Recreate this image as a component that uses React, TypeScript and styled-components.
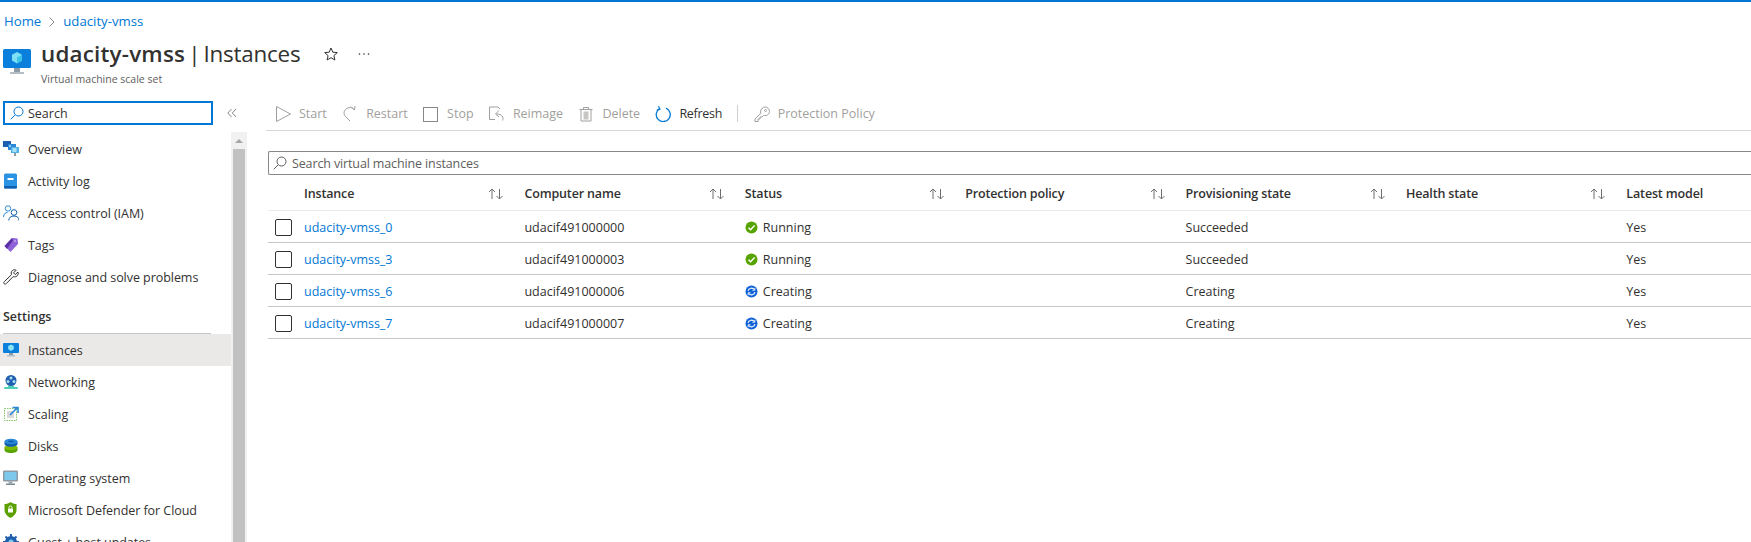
import type { ReactNode } from "react";
import styled, { createGlobalStyle } from "styled-components";

const GlobalStyle = createGlobalStyle`
  html, body {
    margin: 0;
    padding: 0;
    height: 100%;
    overflow: hidden;
    background: #fff;
    font-family: "Open Sans", "Noto Sans", "Liberation Sans", sans-serif;
    font-size: 12.5px;
    color: #323130;
  }
  * { box-sizing: border-box; }
`;

const Page = styled.div`
  width: 1751px;
  height: 542px;
  overflow: hidden;
  border-top: 2px solid #0078d4;
`;

const Breadcrumb = styled.div`
  height: 34px;
  padding: 10px 0 0 4px;
  display: flex;
  align-items: flex-start;
  gap: 8px;
  font-size: 13.2px;
  line-height: 18px;
  color: #0078d4;
  svg { margin-top: 5px; }
`;

const TitleBlock = styled.div`
  height: 62px;
  display: flex;
  padding-left: 3px;
`;

const TitleIcon = styled.div`
  width: 38px;
  padding-top: 11px;
`;

const TitleText = styled.div`
  display: flex;
  flex-direction: column;
`;

const TitleRow = styled.div`
  display: flex;
  align-items: center;
  height: 34px;
  margin-top: 1px;
`;

const Title = styled.h1`
  margin: 0;
  font-size: 22.4px;
  line-height: 34px;
  font-weight: 400;
  color: #323130;
  white-space: nowrap;
  letter-spacing: -0.2px;
  word-spacing: -2.5px;
  b { font-weight: 600; letter-spacing: 0.2px; }
`;

const TitleActions = styled.div`
  display: flex;
  align-items: center;
  gap: 20px;
  margin-left: 24px;
`;

const Subtitle = styled.div`
  font-size: 10.5px;
  line-height: 14px;
  color: #605e5c;
  margin-top: 1px;
`;

const Body = styled.div`
  display: flex;
  height: 444px;
`;

const Sidebar = styled.aside`
  width: 247px;
  flex: none;
  display: flex;
  flex-direction: column;
  padding-top: 3px;
`;

const SearchRow = styled.div`
  display: flex;
  align-items: center;
  height: 24px;
  padding-left: 3px;
`;

const SideSearch = styled.div`
  width: 210px;
  height: 24px;
  border: 2px solid #0078d4;
  display: flex;
  align-items: center;
  gap: 4px;
  padding-left: 5px;
  color: #323130;
`;

const Collapse = styled.div`
  margin-left: 14px;
  display: flex;
`;

const SideBody = styled.div`
  display: flex;
  margin-top: 7px;
  flex: 1;
  overflow: hidden;
`;

const NavList = styled.nav`
  width: 231px;
  flex: none;
  padding-top: 1px;
`;

const NavItem = styled.div<{ $active?: boolean }>`
  height: 32px;
  display: flex;
  align-items: center;
  gap: 9px;
  padding-left: 3px;
  white-space: nowrap;
  letter-spacing: -0.05px;
  background: ${(p) => (p.$active ? "#ebe9e8" : "transparent")};
  svg { flex: none; }
`;

const NavGroup = styled.div`
  margin: 10px 0 0 3px;
  width: 208px;
  height: 31px;
  line-height: 28px;
  font-weight: 600;
  border-bottom: 1px solid #c8c6c4;
  color: #323130;
`;

const ScrollTrack = styled.div`
  width: 16px;
  flex: none;
  background: #f1f1f1;
  padding: 0 2px;
  display: flex;
  flex-direction: column;
`;

const ScrollArrow = styled.div`
  height: 17px;
  display: flex;
  align-items: center;
  justify-content: center;
  &::before {
    content: "";
    border-left: 4px solid transparent;
    border-right: 4px solid transparent;
    border-bottom: 4px solid #a6a6a6;
  }
`;

const ScrollThumb = styled.div`
  flex: 1;
  background: #c1c1c1;
`;

const Main = styled.main`
  flex: 1;
  min-width: 0;
  padding: 0 0 0 19px;
`;

const Toolbar = styled.div`
  height: 33px;
  display: flex;
  align-items: center;
  gap: 15.3px;
  padding: 0 0 1px 9px;
  border-bottom: 1px solid #d6d6d6;
`;

const ToolButton = styled.div<{ $enabled?: boolean }>`
  display: flex;
  align-items: center;
  gap: 8px;
  color: ${(p) => (p.$enabled ? "#323130" : "#a19f9d")};
  letter-spacing: ${(p) => (p.$enabled ? "-0.3px" : "0")};
  white-space: nowrap;
`;

const ToolDivider = styled.div`
  width: 1px;
  height: 17px;
  background: #d2d0ce;
`;

const Filter = styled.div`
  margin: 20px 0 0 2px;
  height: 24px;
  border: 1px solid #8a8886;
  border-right: none;
  border-radius: 2px 0 0 2px;
  display: flex;
  align-items: center;
  gap: 5px;
  padding-left: 4px;
  color: #605e5c;
  letter-spacing: -0.13px;
`;

const Table = styled.div`
  margin-left: 2px;
`;

const Row = styled.div<{ $header?: boolean }>`
  display: grid;
  grid-template-columns: 36px repeat(6, 220.4px) 200px;
  align-items: center;
  height: ${(p) => (p.$header ? "36px" : "32px")};
  padding-top: 2px;
  border-bottom: 1px solid ${(p) => (p.$header ? "#edebe9" : "#c8c6c4")};
  white-space: nowrap;
`;

const CheckCell = styled.div`
  display: flex;
  padding-left: 7px;
`;

const CheckBox = styled.div`
  width: 17px;
  height: 17px;
  border: 1px solid #323130;
  border-radius: 2px;
`;

const HeadCell = styled.div`
  display: flex;
  align-items: center;
  justify-content: space-between;
  padding-right: 20px;
  font-weight: 600;
  color: #323130;
  letter-spacing: -0.15px;
`;

const Cell = styled.div`
  display: flex;
  align-items: center;
  gap: 5px;
`;

const NameLink = styled.a`
  color: #0078d4;
`;

const Svg = ({ size = 16, w, h, children }: { size?: number; w?: number; h?: number; children: ReactNode }) => (
  <svg width={w ?? size} height={h ?? size} viewBox={`0 0 ${w ?? size} ${h ?? size}`} fill="none">
    {children}
  </svg>
);

const Monitor = ({ large }: { large?: boolean }) =>
  large ? (
    <Svg w={30} h={28}>
      <rect x="0" y="2" width="28" height="19" rx="1.5" fill="#0a7fdc" />
      <rect x="11" y="21" width="6" height="4" fill="#8f9ca6" />
      <rect x="7" y="25" width="14" height="2" fill="#b5bec5" />
      <path d="M14 5l5 2.8v5.6L14 16.5 9 13.400V7.800z" fill="#7fe0f5" />
      <path d="M14 10.500l5-2.700v5.600L14 16.500z" fill="#3cc3ea" />
    </Svg>
  ) : (
    <Svg size={16}>
      <rect x="0" y="1" width="16" height="10" rx="1" fill="#0a7fdc" />
      <rect x="6" y="11" width="4" height="2.500" fill="#8f9ca6" />
      <rect x="4" y="13" width="8" height="1.500" fill="#b5bec5" />
      <path d="M8 2.500l2.800 1.600v3.200L8 9 5.200 7.300V4.100z" fill="#8be3f6" />
    </Svg>
  );

const OverviewIcon = () => (
  <Svg size={16}>
    <rect x="0" y="0" width="8" height="6" fill="#1b5fb5" />
    <rect x="5" y="3" width="8" height="6" fill="#2b88d8" />
    <rect x="6" y="4" width="2" height="2" fill="#8fd0f5" />
    <rect x="8" y="6" width="8" height="6" fill="#50b0e8" />
    <rect x="9.500" y="7" width="4" height="4" fill="#a8e2f8" />
    <rect x="11" y="12" width="2" height="3" fill="#8f9ca6" />
  </Svg>
);

const LogIcon = () => (
  <Svg size={16}>
    <rect x="1" y="0.500" width="13" height="15" rx="1.500" fill="#2a93e3" />
    <rect x="1" y="13" width="13" height="2.500" rx="1" fill="#0f5fae" />
    <rect x="4.500" y="5" width="6" height="2" fill="#fff" />
  </Svg>
);

const IamIcon = () => (
  <Svg size={16}>
    <circle cx="5" cy="3.500" r="2.700" stroke="#2b88d8" />
    <path d="M.500 12c0-3 2-4.500 4-4.500" stroke="#2b88d8" />
    <circle cx="11" cy="7.500" r="2.800" stroke="#0f5fae" />
    <path d="M5.800 15.500c0-3 2.200-4.500 5.200-4.500s5 1.500 5 4.500" stroke="#0f5fae" />
  </Svg>
);

const TagIcon = () => (
  <Svg size={16}>
    <path d="M9 1l5.500.5.500 5.500L7.500 15 1.500 9z" fill="#8f63d8" />
    <path d="M1.500 9L9 1l1 2.500L4 12z" fill="#5b2fa5" />
    <circle cx="12" cy="4" r="1" fill="#c9aef0" />
  </Svg>
);

const WrenchIcon = () => (
  <Svg size={16}>
    <path
      d="M15 3l-2.800 2.600-1.700-1.700L13.200 1.200c-1.800-.9-4.700-.4-5 2.800 0 .7.200 1.300.3 1.700L1.400 12.500c-.8.800-.8 1.600-.2 2.200.7.600 1.400.600 2.200-.2l6.800-6.900c2.800 1 5.800-1.200 4.800-4.600z"
      stroke="#323130"
    />
  </Svg>
);

const NetIcon = () => (
  <Svg size={16}>
    <circle cx="8" cy="6.500" r="5.500" fill="#1f5fae" />
    <circle cx="8" cy="4" r="1.500" fill="#a8dcf5" />
    <circle cx="5" cy="7.500" r="1.500" fill="#a8dcf5" />
    <circle cx="11" cy="7.500" r="1.500" fill="#a8dcf5" />
    <rect x="1" y="13" width="14" height="2" rx="1" fill="#4fd0b8" />
    <rect x="5" y="12" width="6" height="1" fill="#4fd0b8" />
  </Svg>
);

const ScaleIcon = () => (
  <Svg size={16}>
    <rect x="1.500" y="2.500" width="12" height="12" stroke="#86c66a" strokeDasharray="1.500 1" />
    <rect x="4" y="5" width="7" height="7" fill="#d8d8d8" />
    <path d="M7 9l7-7M9.500 1.500H15V7" stroke="#2b88d8" strokeWidth="1.600" />
  </Svg>
);

const DiskIcon = () => (
  <Svg size={16}>
    <path d="M1.500 9.500h13V12c0 1.700-3 3-6.500 3s-6.500-1.300-6.500-3z" fill="#57a300" />
    <ellipse cx="8" cy="9.500" rx="6.500" ry="2.800" fill="#7fba00" />
    <path d="M1.500 3.500h13V6c0 1.500-3 2.700-6.500 2.700S1.500 7.500 1.500 6z" fill="#0f5fae" />
    <ellipse cx="8" cy="3.500" rx="6.500" ry="2.800" fill="#2b88d8" />
    <ellipse cx="8" cy="3.500" rx="3" ry="1" fill="#0f5fae" />
  </Svg>
);

const OsIcon = () => (
  <Svg size={16}>
    <rect x="0" y="0.500" width="15" height="11" rx="1" fill="#8d9aa3" />
    <rect x="1.500" y="2" width="12" height="8" fill="#7cc8ec" />
    <rect x="5.500" y="11.500" width="4" height="2" fill="#9aa5ad" />
    <rect x="3" y="13.500" width="9" height="1.500" fill="#7a8b96" />
  </Svg>
);

const DefenderIcon = () => (
  <Svg size={16}>
    <path d="M7.500 0c2 1.500 4 2 6 2v6c0 3.500-2.500 6-6 8-3.500-2-6-4.500-6-8V2c2 0 4-.5 6-2z" fill="#5ca000" />
    <rect x="5" y="6.500" width="5" height="4" rx=".5" fill="#fff" />
    <path d="M6 6.500V5.500a1.500 1.500 0 013 0v1" stroke="#fff" />
  </Svg>
);

const GearIcon = () => (
  <Svg size={16}>
    <circle cx="8" cy="8" r="6" fill="#1f5fae" />
    <path d="M8 0v16M0 8h16M2.500 2.500l11 11M13.500 2.500l-11 11" stroke="#1f5fae" strokeWidth="2" />
    <circle cx="8" cy="8" r="2.500" fill="#7fc8f0" />
  </Svg>
);

const SearchIcon = ({ color = "#605e5c" }: { color?: string }) => (
  <Svg size={14}>
    <circle cx="8.500" cy="5.500" r="4.500" stroke={color} />
    <path d="M5.200 8.800L.7 13.300" stroke={color} />
  </Svg>
);

const SortIcon = () => (
  <Svg w={16} h={12}>
    <path d="M4 11V1.500M1 4l3-3 3 3" stroke="#605e5c" strokeWidth=".9" />
    <path d="M11.500 1v9.500M8.500 8l3 3 3-3" stroke="#605e5c" strokeWidth=".9" />
  </Svg>
);

const RunningIcon = () => (
  <Svg size={13}>
    <circle cx="6.500" cy="6.500" r="6" fill="#57a300" />
    <path d="M3.500 6.700l2.100 2.100 4-4.200" stroke="#fff" strokeWidth="1.400" />
  </Svg>
);

const CreatingIcon = () => (
  <Svg size={13}>
    <circle cx="6.500" cy="6.500" r="6" fill="#0f62d6" />
    <path d="M3 5.800a3.600 3.600 0 016.300-1.300M10 7.200a3.600 3.600 0 01-6.300 1.300" stroke="#fff" strokeWidth="1.100" />
    <path d="M9.800 2.800v2.400H7.400M3.200 10.200V7.800h2.400" stroke="#fff" strokeWidth=".9" />
  </Svg>
);

const gray = "#a19f9d";

const tools = [
  {
    label: "Start",
    icon: <Svg size={16}><path d="M1.500 .5v15L15.500 8z" stroke={gray} /></Svg>,
  },
  {
    label: "Restart",
    icon: <Svg size={16}><path d="M9 .5l3.500 3.500L13 0M12.500 4C10 1 6.500 1 4 3 1.500 5 1.500 8.500 3.500 10.500L8 15" stroke={gray} /></Svg>,
  },
  {
    label: "Stop",
    icon: <Svg size={16}><rect x="0.500" y="1.500" width="14" height="14" stroke="#8a8886" /></Svg>,
  },
  {
    label: "Reimage",
    icon: <Svg size={16}><path d="M6 13.500H.5V1H9l2 2M13.500 14.500c1.500-3-.5-6.500-6-6.500M10 4.500L6.500 8l3.500 3" stroke={gray} /></Svg>,
  },
  {
    label: "Delete",
    icon: <Svg size={16}><path d="M1.500 3.500h13M5.500 3.500v-2h5v2M3 3.500V15h10V3.500" stroke={gray} /><rect x="5.500" y="5.500" width="5" height="8" fill="#c8c6c4" /></Svg>,
  },
];

const navTop = [
  { label: "Overview", icon: <OverviewIcon /> },
  { label: "Activity log", icon: <LogIcon /> },
  { label: "Access control (IAM)", icon: <IamIcon /> },
  { label: "Tags", icon: <TagIcon /> },
  { label: "Diagnose and solve problems", icon: <WrenchIcon /> },
];

const navSettings = [
  { label: "Instances", icon: <Monitor />, active: true },
  { label: "Networking", icon: <NetIcon /> },
  { label: "Scaling", icon: <ScaleIcon /> },
  { label: "Disks", icon: <DiskIcon /> },
  { label: "Operating system", icon: <OsIcon /> },
  { label: "Microsoft Defender for Cloud", icon: <DefenderIcon /> },
  { label: "Guest + host updates", icon: <GearIcon /> },
];

const columns = ["Instance", "Computer name", "Status", "Protection policy", "Provisioning state", "Health state"];

const instances = [
  { name: "udacity-vmss_0", computer: "udacif491000000", status: "Running", state: "Succeeded" },
  { name: "udacity-vmss_3", computer: "udacif491000003", status: "Running", state: "Succeeded" },
  { name: "udacity-vmss_6", computer: "udacif491000006", status: "Creating", state: "Creating" },
  { name: "udacity-vmss_7", computer: "udacif491000007", status: "Creating", state: "Creating" },
];

export default function App() {
  return (
    <Page>
      <GlobalStyle />
      <Breadcrumb>
        <span>Home</span>
        <Svg w={6} h={10}><path d="M.5.500l4.500 4.500-4.500 4.500" stroke="#8a8886" /></Svg>
        <span>udacity-vmss</span>
      </Breadcrumb>
      <TitleBlock>
        <TitleIcon><Monitor large /></TitleIcon>
        <TitleText>
          <TitleRow>
            <Title><b>udacity-vmss</b> | Instances</Title>
            <TitleActions>
              <Svg size={14}><path d="M7 1l1.800 4.200 4.500.4-3.400 3 1 4.400L7 10.700 3.100 13l1-4.400-3.400-3 4.500-.4z" stroke="#323130" /></Svg>
              <Svg w={12} h={4}><circle cx="1.500" cy="2" r=".8" fill="#323130" /><circle cx="6" cy="2" r=".8" fill="#323130" /><circle cx="10.500" cy="2" r=".8" fill="#323130" /></Svg>
            </TitleActions>
          </TitleRow>
          <Subtitle>Virtual machine scale set</Subtitle>
        </TitleText>
      </TitleBlock>
      <Body>
        <Sidebar>
          <SearchRow>
            <SideSearch>
              <SearchIcon color="#0078d4" />
              Search
            </SideSearch>
            <Collapse>
              <Svg w={10} h={10}><path d="M4.500 1L.8 5l3.700 4M9 1L5.300 5 9 9" stroke="#8a8886" /></Svg>
            </Collapse>
          </SearchRow>
          <SideBody>
            <NavList>
              {navTop.map((item) => (
                <NavItem key={item.label}>{item.icon}{item.label}</NavItem>
              ))}
              <NavGroup>Settings</NavGroup>
              {navSettings.map((item) => (
                <NavItem key={item.label} $active={item.active}>{item.icon}{item.label}</NavItem>
              ))}
            </NavList>
            <ScrollTrack>
              <ScrollArrow />
              <ScrollThumb />
            </ScrollTrack>
          </SideBody>
        </Sidebar>
        <Main>
          <Toolbar>
            {tools.map((tool) => (
              <ToolButton key={tool.label}>{tool.icon}{tool.label}</ToolButton>
            ))}
            <ToolButton $enabled>
              <Svg size={16}>
                <path d="M11 2.100A7 7 0 114.500 2.600" stroke="#0078d4" strokeWidth="1.300" />
                <path d="M3.500.2l1.500 3-3.300 1" stroke="#0078d4" strokeWidth="1.100" />
              </Svg>
              Refresh
            </ToolButton>
            <ToolDivider />
            <ToolButton>
              <Svg size={16}>
                <path d="M1 15.500V13l5.700-5.700C6 4 8.500 1 11 1c2.500 0 4.500 2 4.500 4.500S13 10.200 9.500 9.500L8 11H6v2H4v2.500z" stroke={gray} />
                <circle cx="11.500" cy="4.500" r="1" stroke={gray} />
              </Svg>
              Protection Policy
            </ToolButton>
          </Toolbar>
          <Filter>
            <SearchIcon />
            Search virtual machine instances
          </Filter>
          <Table>
            <Row $header>
              <span />
              {columns.map((col) => (
                <HeadCell key={col}>{col}<SortIcon /></HeadCell>
              ))}
              <HeadCell>Latest model</HeadCell>
            </Row>
            {instances.map((vm) => (
              <Row key={vm.name}>
                <CheckCell><CheckBox /></CheckCell>
                <Cell><NameLink>{vm.name}</NameLink></Cell>
                <Cell>{vm.computer}</Cell>
                <Cell>
                  {vm.status === "Running" ? <RunningIcon /> : <CreatingIcon />}
                  {vm.status}
                </Cell>
                <Cell />
                <Cell>{vm.state}</Cell>
                <Cell />
                <Cell>Yes</Cell>
              </Row>
            ))}
          </Table>
        </Main>
      </Body>
    </Page>
  );
}
